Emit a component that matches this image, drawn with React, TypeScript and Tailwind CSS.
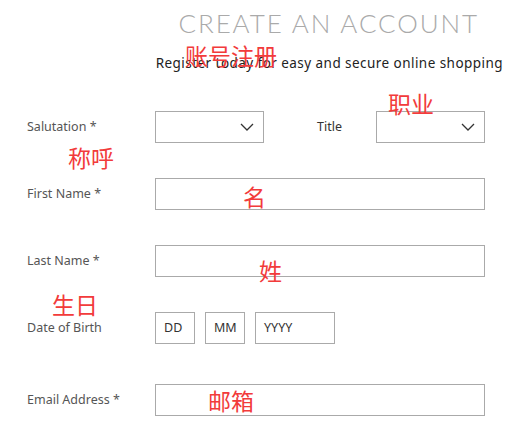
import React from "react";

const Chevron = () => (
  <svg width="14" height="8" viewBox="0 0 14 8" fill="none" className="text-[#333]">
    <path d="M1 1l6 6 6-6" stroke="currentColor" strokeWidth="1.3" />
  </svg>
);

const Select = () => (
  <div className="flex h-[32px] w-[109px] items-center justify-end border border-[#aaaaaa] pr-[9px]">
    <Chevron />
  </div>
);

const Note = ({ text, className }: { text: string; className: string }) => (
  <div
    className={`absolute text-[23px] leading-none text-[#f23b3b] ${className}`}
    style={{ fontFamily: '"Noto Sans CJK SC", sans-serif' }}
  >
    {text}
  </div>
);

const Label = ({ children }: { children: React.ReactNode }) => (
  <div className="w-[128px] text-[12.5px] text-[#555]">{children}</div>
);

export default function App() {
  return (
    <div
      className="relative h-[422px] w-[519px] overflow-hidden bg-white pl-[27px]"
      style={{ fontFamily: '"Noto Sans", sans-serif' }}
    >
      <div className="flex flex-col items-end pr-[16px]">
        <h1 className="mt-[6px] pr-[24px] font-['Lato'] text-[26px] font-light leading-[34px] tracking-[1.9px] text-[#aaaaaa]">
          CREATE AN ACCOUNT
        </h1>
        <p className="mt-[14px] text-[13.5px] leading-[18px] tracking-[0.45px] text-[#222]">
          Register today for easy and secure online shopping
        </p>
      </div>

      <div className="mt-[39px] flex flex-col">
        <div className="flex items-center">
          <Label>Salutation *</Label>
          <Select />
          <div className="w-[112px] pl-[53px] text-[12.5px] text-[#333]">Title</div>
          <Select />
        </div>

        <div className="mt-[35px] flex items-center">
          <Label>First Name *</Label>
          <div className="h-[32px] w-[330px] border border-[#aaaaaa]" />
        </div>

        <div className="mt-[35px] flex items-center">
          <Label>Last Name *</Label>
          <div className="h-[32px] w-[330px] border border-[#aaaaaa]" />
        </div>

        <div className="mt-[35px] flex items-center">
          <Label>Date of Birth</Label>
          <div className="flex gap-[10px] text-[12.5px] text-[#333]">
            <div className="flex h-[32px] w-[40px] items-center border border-[#aaaaaa] pl-[8px]">DD</div>
            <div className="flex h-[32px] w-[40px] items-center border border-[#aaaaaa] pl-[8px]">MM</div>
            <div className="flex h-[32px] w-[80px] items-center border border-[#aaaaaa] pl-[8px]">YYYY</div>
          </div>
        </div>

        <div className="mt-[40px] flex items-center">
          <Label>Email Address *</Label>
          <div className="h-[32px] w-[330px] border border-[#aaaaaa]" />
        </div>
      </div>

      <Note text="账号注册" className="left-[185px] top-[44px]" />
      <Note text="职业" className="left-[388px] top-[92px]" />
      <Note text="称呼" className="left-[68px] top-[146px]" />
      <Note text="名" className="left-[243px] top-[185px]" />
      <Note text="姓" className="left-[259px] top-[259px]" />
      <Note text="生日" className="left-[52px] top-[293px]" />
      <Note text="邮箱" className="left-[208px] top-[389px]" />
    </div>
  );
}
